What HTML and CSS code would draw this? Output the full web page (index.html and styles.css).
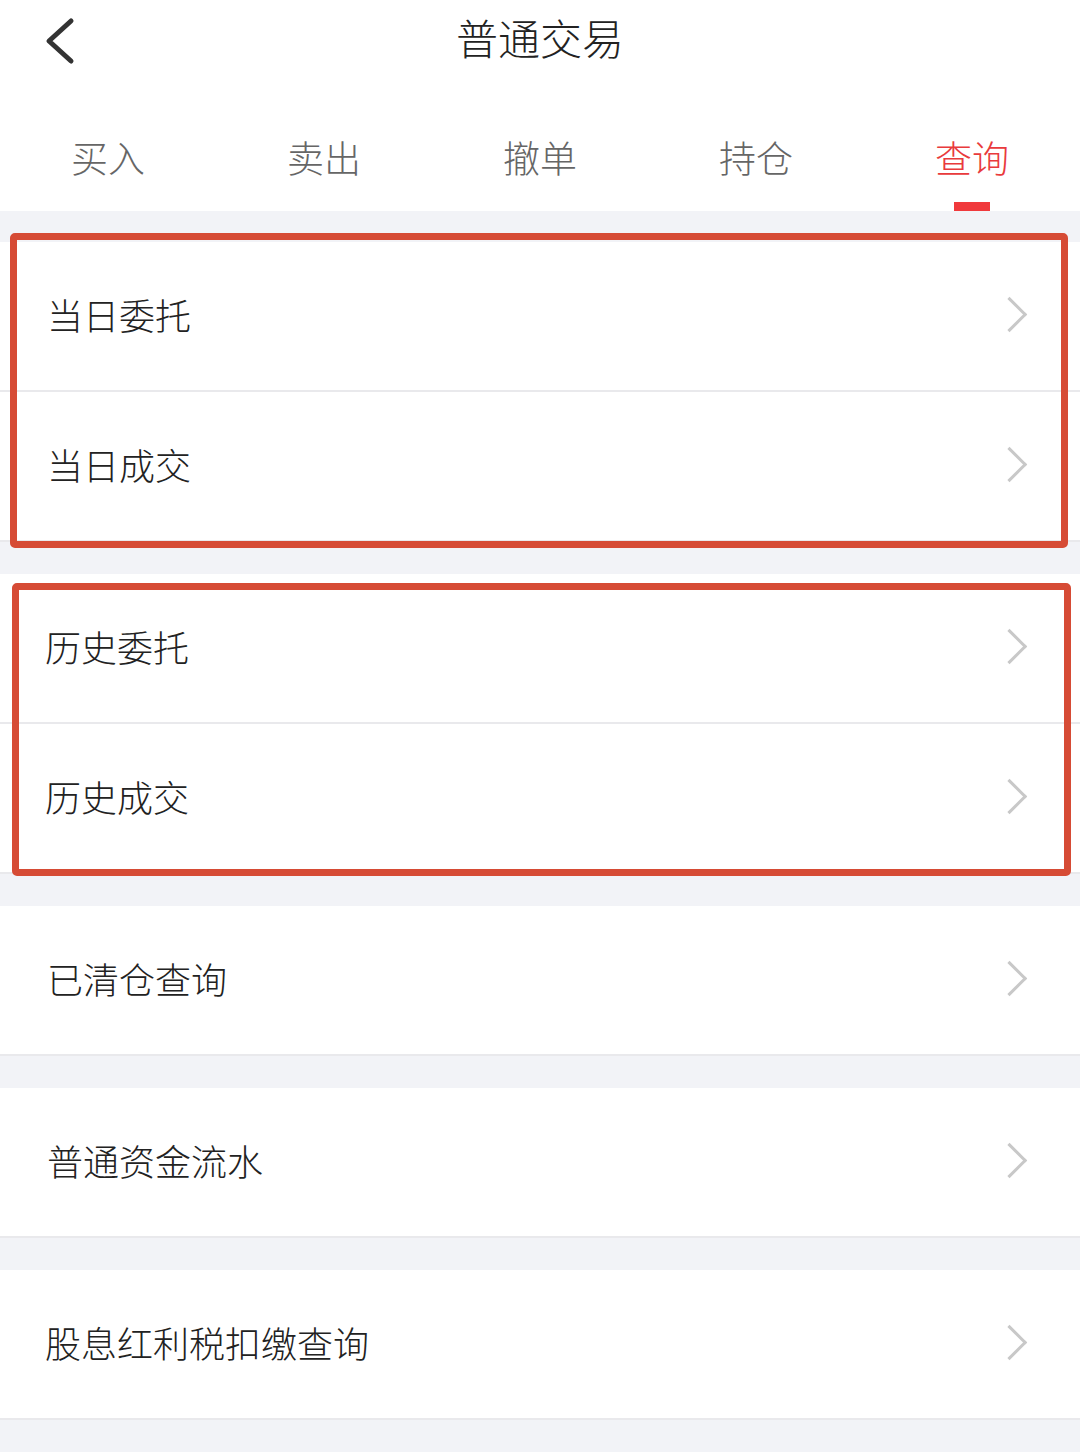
FILE: index.html
```html
<!DOCTYPE html>
<html lang="zh-CN">
<head>
    <meta charset="UTF-8">
    <meta name="viewport" content="width=device-width, initial-scale=1.0">
    <title>普通交易</title>
    <link rel="stylesheet" href="styles.css">
</head>
<body>
    <div class="top">
        <header class="nav-bar">
            <a class="back-btn" href="#">
                <svg width="40" height="50" viewBox="0 0 40 50">
                    <polyline points="28,5 6,25 28,45" fill="none" stroke="#333" stroke-width="5" stroke-linecap="round" stroke-linejoin="round"/>
                </svg>
            </a>
            <h1 class="nav-title">普通交易</h1>
        </header>
        <nav class="tabs">
            <div class="tab">买入</div>
            <div class="tab">卖出</div>
            <div class="tab">撤单</div>
            <div class="tab">持仓</div>
            <div class="tab active">查询</div>
        </nav>
    </div>

    <div class="group first">
        <div class="row"><span>当日委托</span><i class="arrow"></i></div>
        <div class="row"><span>当日成交</span><i class="arrow"></i></div>
        <div class="mark mark-one"></div>
    </div>

    <div class="group">
        <div class="row"><span class="shift">历史委托</span><i class="arrow"></i></div>
        <div class="row"><span class="shift">历史成交</span><i class="arrow"></i></div>
        <div class="mark mark-two"></div>
    </div>

    <div class="group">
        <div class="row"><span>已清仓查询</span><i class="arrow"></i></div>
    </div>

    <div class="group">
        <div class="row"><span>普通资金流水</span><i class="arrow"></i></div>
    </div>

    <div class="group">
        <div class="row"><span class="shift">股息红利税扣缴查询</span><i class="arrow"></i></div>
    </div>
</body>
</html>
```

FILE: styles.css
```css
html, body {
    margin: 0;
    padding: 0;
    background-color: #F2F3F7;
    font-family: "Noto Sans CJK SC", "Noto Sans", sans-serif;
    font-weight: 300;
    color: #222;
}

.top {
    background-color: #FFF;
}

.nav-bar {
    height: 100px;
    display: flex;
    justify-content: center;
    align-items: center;
    position: relative;
}

.back-btn {
    position: absolute;
    left: 43px;
    top: 16px;
    display: block;
    width: 40px;
    height: 50px;
}

.nav-title {
    margin: 0 0 26px 0;
    font-size: 42px;
    font-weight: 300;
    line-height: 1;
    color: #222;
}

.tabs {
    height: 111px;
    display: grid;
    grid-template-columns: repeat(5, 1fr);
}

.tab {
    display: flex;
    justify-content: center;
    padding-top: 39px;
    font-size: 37px;
    line-height: 1;
    color: #666;
    position: relative;
    box-sizing: border-box;
}

.tab.active {
    color: #E93A3C;
}

.tab.active::after {
    content: "";
    position: absolute;
    bottom: 0;
    left: 50%;
    width: 36px;
    height: 9px;
    margin-left: -18px;
    background-color: #F0393C;
}

.group {
    margin-top: 32px;
    position: relative;
}

.group.first {
    margin-top: 31px;
}

.row {
    box-sizing: border-box;
    height: 150px;
    background-color: #FFF;
    border-bottom: 2px solid #E9E9EC;
    display: flex;
    align-items: center;
    justify-content: space-between;
    padding: 0 58px 4px 47px;
}

.row span {
    font-size: 36px;
    line-height: 1;
    color: #222;
}

.row span.shift {
    margin-left: -2px;
}

.arrow {
    display: block;
    width: 22px;
    height: 22px;
    border-top: 3px solid #C8C8C8;
    border-right: 3px solid #C8C8C8;
    transform: rotate(45deg);
}

/* red highlight frames drawn over the rows */
.mark {
    position: absolute;
    border: 7px solid #D64B35;
    border-radius: 5px;
    box-sizing: border-box;
    pointer-events: none;
}

.mark-one {
    top: -9px;
    bottom: -6px;
    left: 10px;
    right: 12px;
}

.mark-two {
    top: 9px;
    bottom: -2px;
    left: 12px;
    right: 9px;
}
```
